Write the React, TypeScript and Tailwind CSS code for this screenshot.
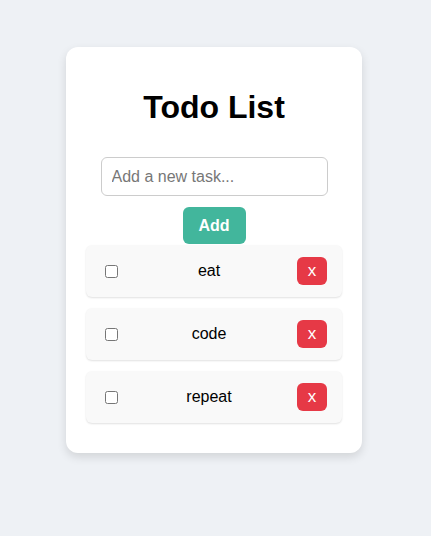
const todos = ["eat", "code", "repeat"]

const TodoItem = ({ text }: { text: string }) => {
    return (
        <li className="flex items-center justify-between bg-[#f9f9f9] rounded-md px-[15px] h-[52px] mb-[11px] shadow-[0_1px_2px_rgba(0,0,0,0.12)]">
            <input type="checkbox" className="w-[13px] h-[13px] ml-[4px] mr-[3px]" />
            <span className="flex-1 text-center text-[16px] text-black">{text}</span>
            <button className="w-[30px] h-[28px] rounded-md bg-[#e63946] text-white text-[17px] leading-none pb-[2px]">x</button>
        </li>
    )
}

const App = () => {
    return (
        <div className="min-h-screen bg-[#eef1f5] pt-[47px] pr-[3px] flex justify-center font-['Liberation_Sans',Arial,sans-serif]">
            <div className="w-[296px] h-[406px] bg-white rounded-xl px-[20px] pt-[42px] shadow-[0_4px_10px_rgba(0,0,0,0.12)]">
                <h1 className="text-[32px] font-bold text-center leading-[37px] text-black">Todo List</h1>

                <div className="flex flex-col items-center mt-[31px]">
                    <input
                        type="text"
                        placeholder="Add a new task..."
                        className="w-[227px] h-[39px] px-[10px] text-[16px] border border-[#ccc] rounded-md placeholder:text-[#777] outline-none"
                    />
                    <button className="mt-[11px] w-[63px] h-[37px] bg-[#42b69c] text-white font-bold text-[16px] rounded-md">
                        Add
                    </button>
                </div>

                <ul className="mt-[1px]">
                    {todos.map((t) => (
                        <TodoItem key={t} text={t} />
                    ))}
                </ul>
            </div>
        </div>
    )
}

export default App
